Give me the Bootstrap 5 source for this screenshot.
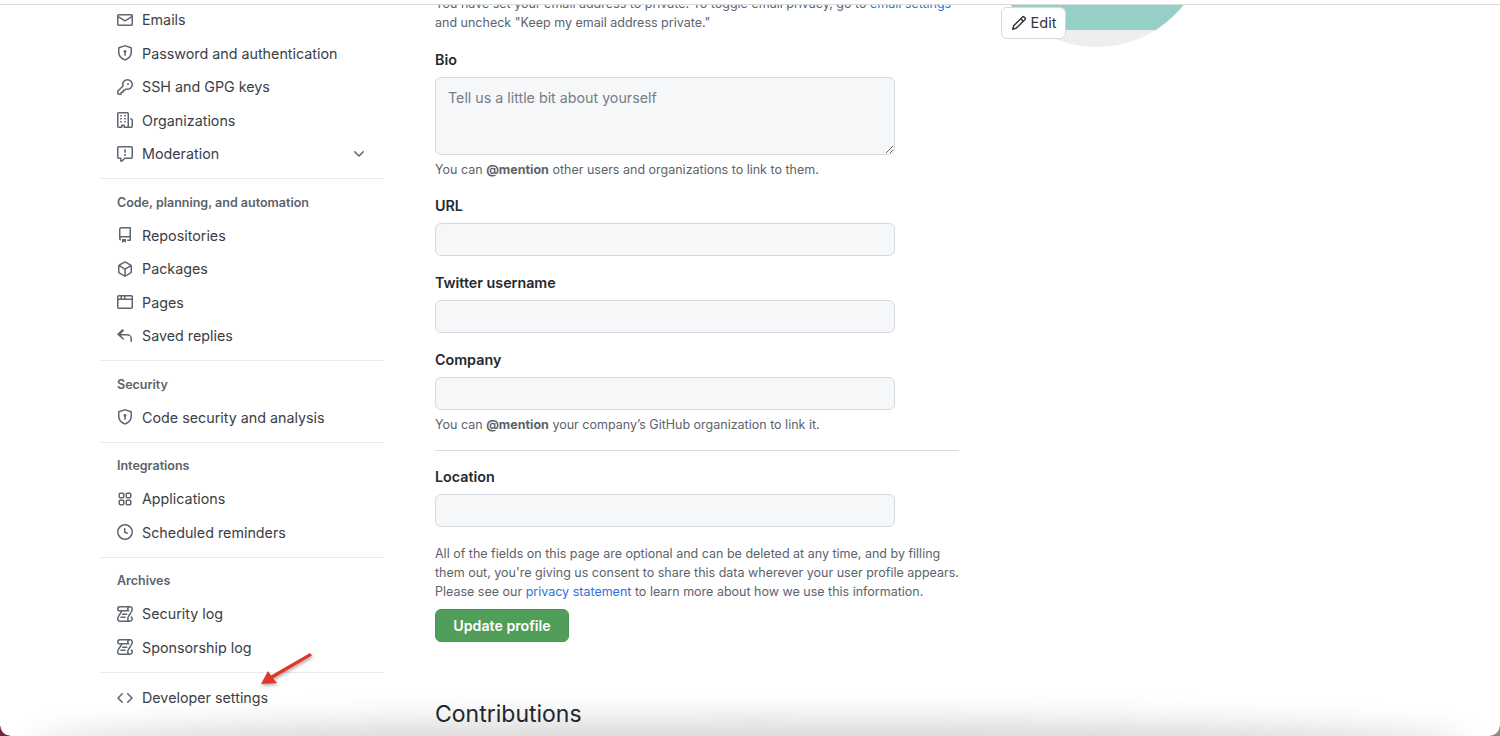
<!DOCTYPE html>
<html lang="en">

<head>
    <meta charset="UTF-8">
    <meta name="viewport" content="width=device-width, initial-scale=1.0">
    <title>Your profile</title>
    <link rel="stylesheet" href="https://cdn.jsdelivr.net/npm/bootstrap@5.3.2/dist/css/bootstrap.min.css">
    <style>
        body {
            font-family: Inter, "Liberation Sans", sans-serif;
            background-color: #fff;
            color: #32373d;
        }

        .page-frame {
            position: relative;
            width: 1500px;
            height: 736px;
            overflow: hidden;
        }

        .top-rule {
            height: 5px;
            border-bottom: 1px solid #d9dadb;
        }

        .settings-wrap {
            height: 731px;
            padding-left: 100px;
            overflow: hidden;
        }

        /* sidebar */
        .side-col {
            width: 284px;
            flex: none;
            margin-top: -2px;
        }

        .side-link {
            height: 33.5px;
            padding: 0 17px;
            gap: 9px;
            font-size: 14.3px;
            color: #3b4046;
        }

        .side-link svg,
        .side-chevron {
            width: 16px;
            height: 16px;
            fill: #5f666e;
            flex: none;
        }

        .side-chevron {
            margin-left: auto;
            margin-right: 0;
        }

        .side-group {
            border-top: 1px solid #ebecee;
            margin-top: 7.5px;
        }

        .side-heading {
            height: 39.5px;
            padding: 9px 17px 0;
            display: flex;
            align-items: center;
            font-size: 12.5px;
            font-weight: 600;
            color: #5c636b;
        }

        .side-last {
            padding-top: 8.5px;
        }

        /* form */
        .form-col {
            width: 524px;
            flex: none;
            margin-left: 51px;
        }

        .hint-text {
            font-size: 12.5px;
            line-height: 19px;
            color: #5c636b;
            margin: 0;
        }

        .hint-text a {
            color: #2f6fd6;
            text-decoration: none;
        }

        .top-hint {
            margin-top: -11px;
            margin-bottom: 18px;
        }

        .field-label {
            font-size: 14.3px;
            font-weight: 600;
            line-height: 20px;
            margin: 0 0 7px;
            color: #24292f;
            display: block;
        }

        .field-input {
            width: 460px;
            height: 33px;
            background-color: #f6f7f9;
            border: 1px solid #d5d9de;
            border-radius: 6px;
            font-size: 14.25px;
            color: #6e7781;
            padding: 5px 12px;
        }

        textarea.field-input {
            height: 78px;
            min-height: 0;
            padding: 9px 12px;
        }

        .field-input::placeholder {
            color: #767d85;
            opacity: 1;
        }

        .field-wrap {
            margin-bottom: 17px;
        }

        .field-hint {
            margin-top: 5px;
        }

        .form-rule {
            margin: -1px 0 16px;
            border: 0;
            border-top: 1px solid #d9dcdf;
            opacity: 1;
        }

        .legal-text {
            margin-top: 17px;
        }

        .save-btn {
            background-color: #519e5b;
            border: 1px solid #4a9554;
            border-radius: 6px;
            color: #fff;
            font-size: 14.2px;
            font-weight: 600;
            width: 134px;
            height: 33px;
            padding: 0;
            margin-top: 8px;
        }

        .section-title {
            font-size: 23px;
            font-weight: 400;
            line-height: 30px;
            color: #24292f;
            margin: 57px 0 0;
        }

        /* avatar */
        .avatar-col {
            position: relative;
            margin-left: 28px;
            width: 220px;
            flex: none;
            height: 60px;
            overflow: hidden;
        }

        .avatar-disc {
            width: 220px;
            height: 220px;
            margin-top: -178px;
            border-radius: 50%;
            background: linear-gradient(#96cfc8 0 203px, #eeeeee 203px);
        }

        .edit-btn {
            position: absolute;
            left: 14px;
            top: 2px;
            width: 65px;
            height: 32px;
            padding: 0;
            background-color: #fff;
            border: 1px solid #d5d9de;
            border-radius: 6px;
            font-size: 14.5px;
            color: #32373d;
            gap: 4px;
        }

        .edit-btn svg {
            width: 16px;
            height: 16px;
            fill: #32373d;
        }

        /* things lying over the page */
        .red-arrow {
            position: absolute;
            left: 250px;
            top: 645px;
            width: 70px;
            height: 50px;
            filter: drop-shadow(1px 2px 1.5px rgba(0, 0, 0, .3));
        }

        .bottom-shade {
            position: absolute;
            left: 50px;
            right: 50px;
            top: 738px;
            height: 20px;
            border-radius: 50%;
            box-shadow: 0 0 32px 18px rgba(0, 0, 0, .16);
        }

        .window-corner {
            position: absolute;
            bottom: 0;
            width: 10px;
            height: 10px;
        }

        .corner-left {
            left: 0;
            background: radial-gradient(circle at 100% 0, transparent 9px, #6b2a33 10px);
        }

        .corner-right {
            right: 0;
            background: radial-gradient(circle at 0 0, transparent 9px, #8a8a8a 10px);
        }
    </style>
</head>

<body>
    <svg width="0" height="0" class="d-none">
        <symbol id="i-mail" viewBox="0 0 16 16"><path d="M1.75 2h12.5c.966 0 1.75.784 1.75 1.75v8.5A1.75 1.75 0 0 1 14.25 14H1.75A1.75 1.75 0 0 1 0 12.25v-8.5C0 2.784.784 2 1.75 2ZM1.5 12.251c0 .138.112.25.25.25h12.5a.25.25 0 0 0 .25-.25V5.809L8.38 9.397a.75.75 0 0 1-.76 0L1.5 5.809v6.442Zm13-8.181v-.32a.25.25 0 0 0-.25-.25H1.75a.25.25 0 0 0-.25.25v.32L8 7.88Z"/></symbol>
        <symbol id="i-shield" viewBox="0 0 16 16"><path d="m8.533.133 5.25 1.68A1.75 1.75 0 0 1 15 3.48V7c0 1.566-.32 3.182-1.303 4.682-.983 1.498-2.585 2.813-5.032 3.855a1.697 1.697 0 0 1-1.33 0c-2.447-1.042-4.049-2.357-5.032-3.855C1.32 10.182 1 8.566 1 7V3.48a1.75 1.75 0 0 1 1.217-1.667l5.25-1.68a1.748 1.748 0 0 1 1.066 0Zm-.61 1.429.001.001-5.25 1.68a.251.251 0 0 0-.174.237V7c0 1.36.275 2.666 1.057 3.859.784 1.194 2.121 2.342 4.366 3.298a.196.196 0 0 0 .154 0c2.245-.957 3.582-2.103 4.366-3.297C13.225 9.666 13.5 8.358 13.5 7V3.48a.25.25 0 0 0-.174-.238l-5.25-1.68a.25.25 0 0 0-.153 0ZM9.5 6.5c0 .536-.286 1.032-.75 1.3v2.45a.75.75 0 0 1-1.5 0V7.8A1.5 1.5 0 1 1 9.5 6.5Z"/></symbol>
        <symbol id="i-key" viewBox="0 0 16 16"><path d="M10.5 0a5.499 5.499 0 1 1-1.288 10.848l-.932.932a.749.749 0 0 1-.53.22H7v.75a.749.749 0 0 1-.22.53l-.5.5a.749.749 0 0 1-.53.22H5v.75a.749.749 0 0 1-.22.53l-.5.5a.749.749 0 0 1-.53.22h-2A1.75 1.75 0 0 1 0 14.25v-2c0-.199.079-.389.22-.53l4.932-4.932A5.5 5.5 0 0 1 10.5 0Zm-4 5.5c-.001.431.069.86.205 1.269a.75.75 0 0 1-.181.768L1.5 12.56v1.69c0 .138.112.25.25.25h1.69l.06-.06v-1.19a.75.75 0 0 1 .75-.75h1.19l.06-.06v-1.19a.75.75 0 0 1 .75-.75h1.19l1.023-1.025a.75.75 0 0 1 .768-.18A4 4 0 1 0 6.5 5.5ZM11 6a1 1 0 1 1 0-2 1 1 0 0 1 0 2Z"/></symbol>
        <symbol id="i-org" viewBox="0 0 16 16"><path d="M1.75 16A1.75 1.75 0 0 1 0 14.25V1.75C0 .784.784 0 1.75 0h8.5C11.216 0 12 .784 12 1.75v12.5c0 .085-.006.168-.018.25h2.268a.25.25 0 0 0 .25-.25V8.285a.25.25 0 0 0-.111-.208l-1.055-.703a.749.749 0 1 1 .832-1.248l1.055.703c.487.325.779.871.779 1.456v5.965A1.75 1.75 0 0 1 14.25 16h-3.5a.766.766 0 0 1-.197-.026c-.099.017-.2.026-.303.026h-3a.75.75 0 0 1-.75-.75V14h-1v1.25a.75.75 0 0 1-.75.75Zm-.25-1.75c0 .138.112.25.25.25H4v-1.25a.75.75 0 0 1 .75-.75h2.5a.75.75 0 0 1 .75.75v1.25h2.25a.25.25 0 0 0 .25-.25V1.75a.25.25 0 0 0-.25-.25h-8.5a.25.25 0 0 0-.25.25ZM3.75 6h.5a.75.75 0 0 1 0 1.5h-.5a.75.75 0 0 1 0-1.5ZM3 3.75A.75.75 0 0 1 3.75 3h.5a.75.75 0 0 1 0 1.5h-.5A.75.75 0 0 1 3 3.75Zm4 3A.75.75 0 0 1 7.75 6h.5a.75.75 0 0 1 0 1.5h-.5A.75.75 0 0 1 7 6.75ZM7.75 3h.5a.75.75 0 0 1 0 1.5h-.5a.75.75 0 0 1 0-1.5ZM3 9.75A.75.75 0 0 1 3.75 9h.5a.75.75 0 0 1 0 1.5h-.5A.75.75 0 0 1 3 9.75ZM7.75 9h.5a.75.75 0 0 1 0 1.5h-.5a.75.75 0 0 1 0-1.5Z"/></symbol>
        <symbol id="i-report" viewBox="0 0 16 16"><path d="M0 1.75C0 .784.784 0 1.75 0h12.5C15.216 0 16 .784 16 1.75v9.5A1.75 1.75 0 0 1 14.25 13H8.06l-2.573 2.573A1.458 1.458 0 0 1 3 14.543V13H1.75A1.75 1.75 0 0 1 0 11.25Zm1.75-.25a.25.25 0 0 0-.25.25v9.5c0 .138.112.25.25.25h2a.75.75 0 0 1 .75.75v2.19l2.72-2.72a.749.749 0 0 1 .53-.22h6.5a.25.25 0 0 0 .25-.25v-9.5a.25.25 0 0 0-.25-.25Zm7 2.25v2.5a.75.75 0 0 1-1.5 0v-2.5a.75.75 0 0 1 1.5 0ZM9 9a1 1 0 1 1-2 0 1 1 0 0 1 2 0Z"/></symbol>
        <symbol id="i-chevron" viewBox="0 0 16 16"><path d="M12.78 5.22a.749.749 0 0 1 0 1.06l-4.25 4.25a.749.749 0 0 1-1.06 0L3.22 6.28a.749.749 0 1 1 1.06-1.06L8 8.939l3.72-3.719a.749.749 0 0 1 1.06 0Z"/></symbol>
        <symbol id="i-repo" viewBox="0 0 16 16"><path d="M2 2.5A2.5 2.5 0 0 1 4.5 0h8.75a.75.75 0 0 1 .75.75v12.5a.75.75 0 0 1-.75.75h-2.5a.75.75 0 0 1 0-1.5h1.75v-2h-8a1 1 0 0 0-.714 1.7.75.75 0 1 1-1.072 1.05A2.495 2.495 0 0 1 2 11.5Zm10.5-1h-8a1 1 0 0 0-1 1v6.708A2.486 2.486 0 0 1 4.5 9h8ZM5 12.25a.25.25 0 0 1 .25-.25h3.5a.25.25 0 0 1 .25.25v3.25a.25.25 0 0 1-.4.2l-1.45-1.087a.249.249 0 0 0-.3 0L5.4 15.7a.25.25 0 0 1-.4-.2Z"/></symbol>
        <symbol id="i-package" viewBox="0 0 16 16"><path d="m8.878.392 5.25 3.045c.54.314.872.89.872 1.514v6.098a1.75 1.75 0 0 1-.872 1.514l-5.25 3.045a1.75 1.75 0 0 1-1.756 0l-5.25-3.045A1.75 1.75 0 0 1 1 11.049V4.951c0-.624.332-1.201.872-1.514L7.122.392a1.75 1.75 0 0 1 1.756 0ZM7.875 1.69l-4.63 2.685L8 7.133l4.755-2.758-4.63-2.685a.248.248 0 0 0-.25 0ZM2.5 5.677v5.372c0 .09.047.171.125.216l4.625 2.683V8.432Zm6.25 8.271 4.625-2.683a.25.25 0 0 0 .125-.216V5.677L8.75 8.432Z"/></symbol>
        <symbol id="i-browser" viewBox="0 0 16 16"><path d="M0 2.75C0 1.784.784 1 1.75 1h12.5c.966 0 1.75.784 1.75 1.75v10.5A1.75 1.75 0 0 1 14.25 15H1.75A1.75 1.75 0 0 1 0 13.25ZM14.5 6h-13v7.25c0 .138.112.25.25.25h12.5a.25.25 0 0 0 .25-.25Zm-6-3.5v2h6V2.75a.25.25 0 0 0-.25-.25ZM5 2.5v2h2v-2Zm-3.25 0a.25.25 0 0 0-.25.25V4.5h2v-2Z"/></symbol>
        <symbol id="i-reply" viewBox="0 0 16 16"><path d="M6.78 1.97a.75.75 0 0 1 0 1.06L3.81 6h6.44A4.75 4.75 0 0 1 15 10.75v2.5a.75.75 0 0 1-1.5 0v-2.5a3.25 3.25 0 0 0-3.25-3.25H3.81l2.97 2.97a.749.749 0 1 1-1.06 1.06L.47 6.78a.75.75 0 0 1 0-1.06l4.25-4.25a.75.75 0 0 1 1.06 0Z"/></symbol>
        <symbol id="i-apps" viewBox="0 0 16 16"><path d="M1.5 3.25c0-.966.784-1.75 1.75-1.75h2.5c.966 0 1.75.784 1.75 1.75v2.5A1.75 1.75 0 0 1 5.75 7.5h-2.5A1.75 1.75 0 0 1 1.5 5.75Zm7 0c0-.966.784-1.75 1.75-1.75h2.5c.966 0 1.75.784 1.75 1.75v2.5a1.75 1.75 0 0 1-1.75 1.75h-2.5A1.75 1.75 0 0 1 8.5 5.75Zm-7 7c0-.966.784-1.75 1.75-1.75h2.5c.966 0 1.75.784 1.75 1.75v2.5a1.75 1.75 0 0 1-1.75 1.75h-2.5a1.75 1.75 0 0 1-1.75-1.75Zm7 0c0-.966.784-1.75 1.75-1.75h2.5c.966 0 1.75.784 1.75 1.75v2.5a1.75 1.75 0 0 1-1.75 1.75h-2.5a1.75 1.75 0 0 1-1.75-1.75ZM3.25 3a.25.25 0 0 0-.25.25v2.5c0 .138.112.25.25.25h2.5A.25.25 0 0 0 6 5.75v-2.5A.25.25 0 0 0 5.75 3Zm7 0a.25.25 0 0 0-.25.25v2.5c0 .138.112.25.25.25h2.5a.25.25 0 0 0 .25-.25v-2.5a.25.25 0 0 0-.25-.25Zm-7 7a.25.25 0 0 0-.25.25v2.5c0 .138.112.25.25.25h2.5a.25.25 0 0 0 .25-.25v-2.5a.25.25 0 0 0-.25-.25Zm7 0a.25.25 0 0 0-.25.25v2.5c0 .138.112.25.25.25h2.5a.25.25 0 0 0 .25-.25v-2.5a.25.25 0 0 0-.25-.25Z"/></symbol>
        <symbol id="i-clock" viewBox="0 0 16 16"><path d="M8 0a8 8 0 1 1 0 16A8 8 0 0 1 8 0ZM1.5 8a6.5 6.5 0 1 0 13 0 6.5 6.5 0 0 0-13 0Zm7-3.25v2.992l2.028.812a.75.75 0 0 1-.557 1.392l-2.5-1A.751.751 0 0 1 7 8.25v-3.5a.75.75 0 0 1 1.5 0Z"/></symbol>
        <symbol id="i-log" viewBox="0 0 16 16"><path d="M5 8.25a.75.75 0 0 1 .75-.75h4a.75.75 0 0 1 0 1.5h-4A.75.75 0 0 1 5 8.25ZM4 10.5A.75.75 0 0 0 4 12h4a.75.75 0 0 0 0-1.5H4Z"/><path d="M13-.005c1.654 0 3 1.328 3 3 0 .982-.338 1.933-.783 2.818-.443.879-1.028 1.758-1.582 2.588l-.011.017c-.568.853-1.104 1.659-1.501 2.446-.398.789-.623 1.494-.623 2.136a1.5 1.5 0 1 0 2.333-1.248.75.75 0 0 1 .834-1.246A3 3 0 0 1 13 16H3a3 3 0 0 1-3-3c0-1.582.891-3.135 1.777-4.506.209-.322.418-.637.623-.946.473-.709.923-1.386 1.287-2.048H2.51c-.576 0-1.381-.133-1.907-.783A2.68 2.68 0 0 1 0 2.995a3 3 0 0 1 3-3Zm0 1.5a1.5 1.5 0 0 0-1.5 1.5c0 .476.223.834.667 1.132A.75.75 0 0 1 11.75 5.5H5.368c-.467 1.003-1.141 2.015-1.773 2.963-.197.296-.39.586-.57.864C2.13 10.71 1.5 11.907 1.5 13A1.5 1.5 0 0 0 3 14.5h7.401A2.989 2.989 0 0 1 10 13c0-.979.338-1.928.784-2.812.441-.874 1.023-1.748 1.575-2.576l.017-.026c.568-.853 1.103-1.658 1.501-2.448.398-.79.623-1.497.623-2.143 0-.838-.669-1.5-1.5-1.5Zm-10 0a1.5 1.5 0 0 0-1.5 1.5c0 .321.1.569.27.778.097.12.325.227.74.227h7.674A2.737 2.737 0 0 1 10 2.995c0-.546.146-1.059.401-1.5Z"/></symbol>
        <symbol id="i-code" viewBox="0 0 16 16"><path d="m11.28 3.22 4.25 4.25a.75.75 0 0 1 0 1.06l-4.25 4.25a.749.749 0 0 1-1.275-.326.749.749 0 0 1 .215-.734L13.94 8l-3.72-3.72a.749.749 0 0 1 .326-1.275.749.749 0 0 1 .734.215Zm-6.56 0a.751.751 0 0 1 1.042.018.751.751 0 0 1 .018 1.042L2.06 8l3.72 3.72a.749.749 0 0 1-.326 1.275.749.749 0 0 1-.734-.215L.47 8.53a.75.75 0 0 1 0-1.06Z"/></symbol>
        <symbol id="i-pencil" viewBox="0 0 16 16"><path d="M11.013 1.427a1.75 1.75 0 0 1 2.474 0l1.086 1.086a1.75 1.75 0 0 1 0 2.474l-8.61 8.61c-.21.21-.47.364-.756.445l-3.251.93a.75.75 0 0 1-.927-.928l.929-3.25c.081-.286.235-.547.445-.758l8.61-8.61Zm.176 4.823L9.75 4.81l-6.286 6.287a.253.253 0 0 0-.064.108l-.558 1.953 1.953-.558a.253.253 0 0 0 .108-.064Zm1.238-3.763a.25.25 0 0 0-.354 0L10.811 3.75l1.439 1.44 1.263-1.263a.25.25 0 0 0 0-.354Z"/></symbol>
    </svg>

    <div class="page-frame">
        <div class="top-rule"></div>
        <div class="settings-wrap d-flex">
            <!-- Sidebar -->
            <aside class="side-col">
                <nav class="nav flex-column">
                    <a class="nav-link side-link d-flex align-items-center" href="#"><svg><use href="#i-mail"/></svg>Emails</a>
                    <a class="nav-link side-link d-flex align-items-center" href="#"><svg><use href="#i-shield"/></svg>Password and authentication</a>
                    <a class="nav-link side-link d-flex align-items-center" href="#"><svg><use href="#i-key"/></svg>SSH and GPG keys</a>
                    <a class="nav-link side-link d-flex align-items-center" href="#"><svg><use href="#i-org"/></svg>Organizations</a>
                    <a class="nav-link side-link d-flex align-items-center" href="#"><svg><use href="#i-report"/></svg>Moderation<svg class="side-chevron"><use href="#i-chevron"/></svg></a>
                </nav>
                <div class="side-group">
                    <div class="side-heading">Code, planning, and automation</div>
                    <nav class="nav flex-column">
                        <a class="nav-link side-link d-flex align-items-center" href="#"><svg><use href="#i-repo"/></svg>Repositories</a>
                        <a class="nav-link side-link d-flex align-items-center" href="#"><svg><use href="#i-package"/></svg>Packages</a>
                        <a class="nav-link side-link d-flex align-items-center" href="#"><svg><use href="#i-browser"/></svg>Pages</a>
                        <a class="nav-link side-link d-flex align-items-center" href="#"><svg><use href="#i-reply"/></svg>Saved replies</a>
                    </nav>
                </div>
                <div class="side-group">
                    <div class="side-heading">Security</div>
                    <nav class="nav flex-column">
                        <a class="nav-link side-link d-flex align-items-center" href="#"><svg><use href="#i-shield"/></svg>Code security and analysis</a>
                    </nav>
                </div>
                <div class="side-group">
                    <div class="side-heading">Integrations</div>
                    <nav class="nav flex-column">
                        <a class="nav-link side-link d-flex align-items-center" href="#"><svg><use href="#i-apps"/></svg>Applications</a>
                        <a class="nav-link side-link d-flex align-items-center" href="#"><svg><use href="#i-clock"/></svg>Scheduled reminders</a>
                    </nav>
                </div>
                <div class="side-group">
                    <div class="side-heading">Archives</div>
                    <nav class="nav flex-column">
                        <a class="nav-link side-link d-flex align-items-center" href="#"><svg><use href="#i-log"/></svg>Security log</a>
                        <a class="nav-link side-link d-flex align-items-center" href="#"><svg><use href="#i-log"/></svg>Sponsorship log</a>
                    </nav>
                </div>
                <div class="side-group side-last">
                    <nav class="nav flex-column">
                        <a class="nav-link side-link d-flex align-items-center" href="#"><svg><use href="#i-code"/></svg>Developer settings</a>
                    </nav>
                </div>
            </aside>

            <!-- Profile form -->
            <main class="form-col">
                <p class="hint-text top-hint">You have set your email address to private. To toggle email privacy, go to <a href="#">email settings</a><br>and uncheck "Keep my email address private."</p>
                <div class="field-wrap">
                    <label class="field-label" for="bio">Bio</label>
                    <textarea class="form-control field-input" id="bio" placeholder="Tell us a little bit about yourself"></textarea>
                    <p class="hint-text field-hint">You can <b>@mention</b> other users and organizations to link to them.</p>
                </div>
                <div class="field-wrap">
                    <label class="field-label" for="url">URL</label>
                    <input class="form-control field-input" id="url" type="text">
                </div>
                <div class="field-wrap">
                    <label class="field-label" for="twitter">Twitter username</label>
                    <input class="form-control field-input" id="twitter" type="text">
                </div>
                <div class="field-wrap">
                    <label class="field-label" for="company">Company</label>
                    <input class="form-control field-input" id="company" type="text">
                    <p class="hint-text field-hint">You can <b>@mention</b> your company’s GitHub organization to link it.</p>
                </div>
                <hr class="form-rule">
                <div>
                    <label class="field-label" for="location">Location</label>
                    <input class="form-control field-input" id="location" type="text">
                </div>
                <p class="hint-text legal-text">All of the fields on this page are optional and can be deleted at any time, and by filling<br>them out, you're giving us consent to share this data wherever your user profile appears.<br>Please see our <a href="#">privacy statement</a> to learn more about how we use this information.</p>
                <button class="btn save-btn" type="button">Update profile</button>
                <h2 class="section-title">Contributions</h2>
            </main>

            <!-- Avatar -->
            <div class="avatar-col">
                <div class="avatar-disc"></div>
                <button class="btn edit-btn d-flex align-items-center justify-content-center" type="button"><svg><use href="#i-pencil"/></svg>Edit</button>
            </div>
        </div>

        <svg class="red-arrow" viewBox="0 0 70 50">
            <path d="M60 8 L62 10.5 L23 33.5 L27 38 L11 39 L18 26 L21 30.5 Z" fill="#e2362b"/>
        </svg>
        <div class="bottom-shade"></div>
        <div class="window-corner corner-left"></div>
        <div class="window-corner corner-right"></div>
    </div>

    <script src="https://cdn.jsdelivr.net/npm/bootstrap@5.3.2/dist/js/bootstrap.bundle.min.js"></script>
</body>

</html>
